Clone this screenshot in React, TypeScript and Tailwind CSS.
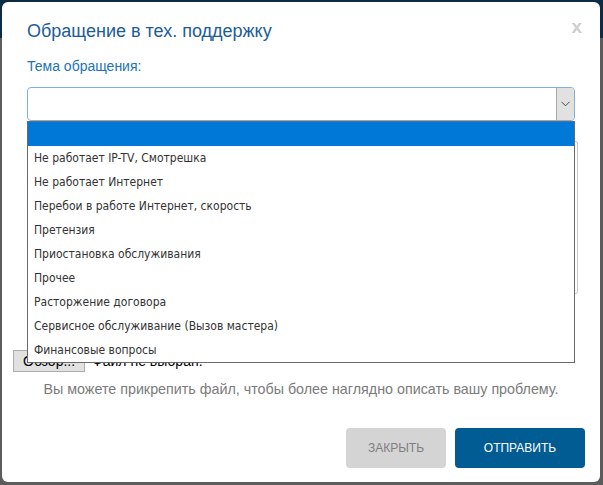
import React from "react";

const items = [
  "",
  "Не работает IP-TV, Смотрешка",
  "Не работает Интернет",
  "Перебои в работе Интернет, скорость",
  "Претензия",
  "Приостановка обслуживания",
  "Прочее",
  "Расторжение договора",
  "Сервисное обслуживание (Вызов мастера)",
  "Финансовые вопросы",
];

export default function App() {
  return (
    <div
      className="w-[603px] h-[485px] overflow-hidden pt-[2px] pl-[2px] bg-[linear-gradient(to_bottom,#0c2b45_0px,#0c2b45_38px,#5c5c5c_38px,#5c5c5c_100%)]"
      style={{ fontFamily: '"Liberation Sans", Arial, sans-serif' }}
    >
      <div className="w-[598px] h-[480px] bg-white rounded-[6px] flex flex-col">
        {/* header */}
        <div className="flex items-start justify-between pt-[19px] pl-[25px] pr-[18px]">
          <h2 className="text-[18px] leading-[20px] text-[#1b5c98]">Обращение в тех. поддержку</h2>
          <span className="text-[19px] leading-[20px] font-bold text-[#cfcfcf] -mt-[4px]">x</span>
        </div>

        <div className="pl-[25px] pr-[21px] flex flex-col">
          <label className="mt-[17px] text-[14px] leading-[16px] text-[#2173b5]">Тема обращения:</label>

          {/* select */}
          <div className="relative mt-[13px] w-[548px]">
            <div className="h-[34px] w-[548px] border border-[#7fb0e2] rounded-[4px] bg-white flex justify-end">
              <div className="w-[18px] h-full bg-[#e1e1e1] border-l border-[#a8a8a8] rounded-r-[3px] flex items-center justify-center">
                <svg width="9" height="6" viewBox="0 0 9 6" fill="none">
                  <path d="M0.5 0.8 L4.5 4.8 L8.5 0.8" stroke="#444" strokeWidth="1" />
                </svg>
              </div>
            </div>

            {/* open dropdown list */}
            <ul
              className="absolute left-0 top-full z-10 w-[548px] border border-[#6a6a6a] bg-white text-[12px] text-[#333]"
              style={{ fontFamily: '"DejaVu Sans Condensed", Tahoma, "Liberation Sans", sans-serif' }}
            >
              {items.map((t, i) => (
                <li
                  key={i}
                  className={
                    i === 0
                      ? "h-[24px] bg-[#0078d7]"
                      : "h-[24px] leading-[25px] pl-[6px] text-[#333]"
                  }
                >
                  {t}
                </li>
              ))}
            </ul>
          </div>

          {/* textarea (mostly covered) */}
          <div className="mt-[20px] w-[551px] h-[153px] border border-[#c8c8c8] rounded-[2px] bg-white" />

          {/* file input */}
          <div className="mt-[56px] -ml-[14px] flex items-center gap-[7px] text-[14px] text-black">
            <span className="h-[22px] px-[9px] flex items-center bg-[#e1e1e1] border border-[#adadad]">Обзор...</span>
            <span>Файл не выбран.</span>
          </div>

          <p className="mt-[9px] -ml-[25px] w-[598px] text-center text-[14.3px] leading-[16px] text-[#7b7b7b]">
            Вы можете прикрепить файл, чтобы более наглядно описать вашу проблему.
          </p>
        </div>

        {/* footer buttons */}
        <div className="mt-auto mb-[14px] pr-[15px] flex justify-end gap-[9px]">
          <button className="w-[100px] h-[40px] rounded-[4px] bg-[#d4d4d4] text-[12px] text-[#7e7e7e]">ЗАКРЫТЬ</button>
          <button className="w-[130px] h-[40px] rounded-[4px] bg-[#015c94] text-[12px] text-white">ОТПРАВИТЬ</button>
        </div>
      </div>
    </div>
  );
}
